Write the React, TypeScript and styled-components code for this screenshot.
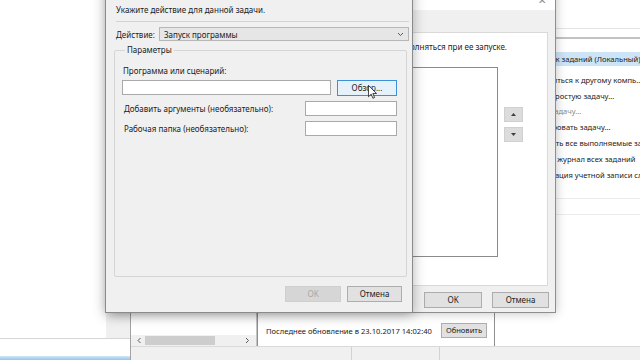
import React from 'react'
import styled, { createGlobalStyle } from 'styled-components'

const GlobalStyle = createGlobalStyle`
  html, body {
    margin: 0;
    padding: 0;
  }
  body {
    width: 640px;
    height: 360px;
    overflow: hidden;
    background: #fff;
    font-family: "Noto Sans", "Liberation Sans", sans-serif;
    font-size: 8px;
    color: #1b1b1b;
  }
  * {
    box-sizing: border-box;
  }
`

const Desktop = styled.div`
  position: relative;
  width: 640px;
  height: 360px;
  overflow: hidden;
  background: #fff;
`

/* window peeking out on the far left */
const SideWindow = styled.div`
  position: absolute;
  left: 0;
  top: 0;
  width: 131px;
  height: 360px;
  display: flex;
  flex-direction: column;
`

const SideBody = styled.div`
  flex: 1;
  display: flex;
  justify-content: flex-end;
  border-bottom: 1px solid #d6d6d6;
`

const SideStrip = styled.div`
  width: 25px;
  background: #f0f0f0;
`

const SideGap = styled.div`
  height: 17px;
`

const SideTaskbar = styled.div`
  height: 4px;
  background: linear-gradient(#d2e6f8, #94c3ee);
`

/* task scheduler main window */
const MainWindow = styled.div`
  position: absolute;
  left: 130px;
  top: 0;
  right: -20px;
  bottom: 0;
  display: grid;
  grid-template-columns: 126px 238px 1fr;
  grid-template-rows: 1fr 14px;
  background: #fff;
  border-left: 1px solid #a3a3a3;
`

const LeftPane = styled.div`
  display: flex;
  flex-direction: column;
  justify-content: flex-end;
  border-right: 1px solid #c4c4c4;
`

const HScroll = styled.div`
  height: 11px;
  display: flex;
  align-items: center;
  padding: 0 5px 0 4px;
  background: #f0f0f0;
`

const ScrollArrow = styled.span`
  width: 8px;
  display: flex;
  justify-content: center;
`

const ScrollThumb = styled.div`
  width: 70px;
  height: 9px;
  margin-left: 2px;
  margin-right: auto;
  background: #cdcdcd;
`

const CenterPane = styled.div`
  display: flex;
  flex-direction: column;
  justify-content: flex-end;
  border-left: 1px solid #8f8f8f;
  border-right: 1px solid #8f8f8f;
`

const RefreshRow = styled.div`
  display: flex;
  align-items: center;
  gap: 9px;
  padding: 0 0 8px 8px;
  font-size: 7.6px;
  white-space: nowrap;
`

const PushButton = styled.button<{ $width?: number; $state?: 'normal' | 'hover' | 'disabled' }>`
  height: ${p => (p.$width ? 16 : 15)}px;
  width: ${p => (p.$width ? `${p.$width}px` : 'auto')};
  padding: 0 4px;
  font: inherit;
  line-height: 1;
  white-space: nowrap;
  background: ${p => (p.$state === 'hover' ? '#e5f1fb' : p.$state === 'disabled' ? '#d6d6d6' : '#e1e1e1')};
  border: 1px solid ${p => (p.$state === 'hover' ? '#3c8fd8' : p.$state === 'disabled' ? '#cfcfcf' : '#adadad')};
  color: ${p => (p.$state === 'disabled' ? '#a8a8a8' : '#1b1b1b')};
`

const ActionsPane = styled.div`
  display: flex;
  flex-direction: column;
  overflow: hidden;
  font-size: 7.6px;
`

const ActionsToolbar = styled.div`
  height: 29px;
  border-bottom: 1px solid #e4e4e4;
`

const ActionsTitle = styled.div`
  height: 10px;
  border-bottom: 2px solid #c2c2c2;
`

const ActionsHeader = styled.div`
  height: 14px;
  margin-top: 13px;
  display: flex;
  align-items: center;
  padding-left: 12px;
  background: #cde4f6;
  white-space: nowrap;
`

const ActionList = styled.div`
  display: flex;
  flex-direction: column;
  margin-top: 6px;
`

const ActionItem = styled.div<{ $muted?: boolean }>`
  height: 15.8px;
  display: flex;
  align-items: center;
  padding-left: 24px;
  white-space: nowrap;
  color: ${p => (p.$muted ? '#8c8c8c' : '#1b1b1b')};
`

const PaneRule = styled.div`
  height: 16px;
  border-bottom: 1px solid #ececec;
`

const StatusBar = styled.div`
  grid-column: 1 / -1;
  display: flex;
  background: #f0f0f0;
  border-top: 1px solid #dadada;
`

const StatusCell = styled.div<{ $width?: number }>`
  flex: ${p => (p.$width ? `0 0 ${p.$width}px` : '1')};
  border-left: 1px solid #d2d2d2;

  &:first-child {
    border-left: none;
  }
`

/* "Создание задачи" dialog behind */
const TaskDialog = styled.div`
  position: absolute;
  left: 110px;
  top: -12px;
  width: 446px;
  height: 325px;
  display: flex;
  flex-direction: column;
  background: #f0f0f0;
  border: 1px solid #8e8e8e;
  box-shadow: 0 0 10px rgba(0, 0, 0, 0.25);
`

const TitleBar = styled.div<{ $height: number }>`
  height: ${p => p.$height}px;
  flex: none;
  display: flex;
  align-items: center;
  justify-content: space-between;
  padding: 0 6px 0 10px;
  background: #fff;
  font-size: 9px;
`

const CloseGlyph = styled.span`
  width: 14px;
  text-align: center;
  font-size: 10px;
  color: #8a8a8a;
`

const TabStrip = styled.div`
  height: 22px;
  flex: none;
  display: flex;
  align-items: flex-end;
  padding-left: 7px;
`

const Tab = styled.span<{ $active?: boolean }>`
  height: ${p => (p.$active ? 15 : 13)}px;
  padding: 0 5px;
  display: flex;
  align-items: center;
  background: ${p => (p.$active ? '#fff' : '#f0f0f0')};
  border: 1px solid #d9d9d9;
  border-bottom: none;
  margin-bottom: -1px;
`

const TabPanel = styled.div`
  flex: 1;
  margin: 0 7px 0 8px;
  display: flex;
  flex-direction: column;
  background: #fff;
  border: 1px solid #d9d9d9;
`

const PanelIntro = styled.div`
  display: flex;
  justify-content: flex-end;
  padding: 9px 40px 0 0;
  line-height: 10px;
  white-space: nowrap;
`

const ListArea = styled.div`
  display: flex;
  margin-top: 15px;
  padding: 0 24px 0 8px;
`

const ListBox = styled.div`
  flex: 1;
  height: 190px;
  background: #fff;
  border: 1px solid #8a8a8a;
`

const MoveButtons = styled.div`
  display: flex;
  flex-direction: column;
  gap: 5px;
  margin-left: 6px;
  padding-top: 40px;
`

const MoveButton = styled.div`
  width: 19px;
  height: 15px;
  display: flex;
  align-items: center;
  justify-content: center;
  background: #dcdcdc;
  border: 1px solid #d0d0d0;
`

const DialogButtons = styled.div<{ $gap: number }>`
  display: flex;
  justify-content: flex-end;
  gap: ${p => p.$gap}px;
`

const TaskButtons = styled(DialogButtons)`
  height: 26px;
  flex: none;
  padding: 6px 6px 0 0;
`

/* "Создание действия" dialog in front */
const ActionDialog = styled.div`
  position: absolute;
  left: 105px;
  top: -20px;
  width: 308px;
  height: 333px;
  display: flex;
  flex-direction: column;
  background: #f0f0f0;
  border: 1px solid #8a8a8a;
  box-shadow: 0 2px 12px rgba(0, 0, 0, 0.3);
`

const DialogBody = styled.div`
  flex: 1;
  display: flex;
  flex-direction: column;
  padding: 0 3px 10px 10px;
`

const Intro = styled.div`
  margin-top: 4px;
  line-height: 12px;
`

const Separator = styled.div`
  margin-top: 5px;
  border-top: 1px solid #d3d3d3;
`

const ActionRow = styled.div`
  display: flex;
  align-items: center;
  margin-top: 5px;
`

const RowLabel = styled.span`
  width: 43px;
  flex: none;
`

const ComboBox = styled.div`
  flex: 1;
  height: 14px;
  display: flex;
  align-items: center;
  justify-content: space-between;
  padding: 0 4px 0 4px;
  background: #e6e6e6;
  border: 1px solid #b7b7b7;
`

const GroupBox = styled.fieldset`
  flex: 1;
  min-width: 0;
  margin: 4px 2px 0 -2px;
  padding: 0 9px 0 7px;
  border: 1px solid #d5d5d5;
  border-radius: 2px;
`

const GroupLegend = styled.legend`
  margin-left: 3px;
  padding: 0 2px;
  line-height: 10px;
`

const FieldLabel = styled.div`
  margin-top: 11px;
  padding-left: 1px;
  line-height: 10px;
`

const PathRow = styled.div`
  display: flex;
  gap: 6px;
  margin-top: 4px;
`

const TextBox = styled.div`
  height: 15px;
  flex: 1;
  background: #fff;
  border: 1px solid #a9a9a9;
`

const OptionRow = styled.div`
  display: grid;
  grid-template-columns: 1fr 92px;
  align-items: center;
  margin-top: 5px;
  padding-left: 2px;
`

const ActionButtons = styled(DialogButtons)`
  margin: 9px 7px 0 0;
`

const Cursor = styled.svg`
  position: absolute;
  left: 368px;
  top: 85px;
`

function Chevron({ dir }: { dir: 'down' | 'left' | 'right' }) {
  const paths = {
    down: 'M1 1 L3.5 3.5 L6 1',
    left: 'M3.5 1 L1 3.5 L3.5 6',
    right: 'M1 1 L3.5 3.5 L1 6',
  }
  const w = dir === 'down' ? 7 : 5
  const h = dir === 'down' ? 5 : 7
  return (
    <svg width={w} height={h} viewBox={`0 0 ${w} ${h}`}>
      <path d={paths[dir]} fill="none" stroke="#5a5a5a" strokeWidth="1" />
    </svg>
  )
}

function Triangle({ up }: { up?: boolean }) {
  return (
    <svg width="5" height="3" viewBox="0 0 5 3">
      <path d={up ? 'M0 3 L2.5 0 L5 3 Z' : 'M0 0 L2.5 3 L5 0 Z'} fill="#404040" />
    </svg>
  )
}

const actions = [
  { label: 'Подключиться к другому компь...' },
  { label: 'Создать простую задачу...' },
  { label: 'Создать задачу...', muted: true },
  { label: 'Импортировать задачу...' },
  { label: 'Отображать все выполняемые задачи' },
  { label: 'Включить журнал всех заданий' },
  { label: 'Конфигурация учетной записи служ...' },
]

export default function App() {
  return (
    <>
      <GlobalStyle />
      <Desktop>
        <SideWindow>
          <SideBody>
            <SideStrip />
          </SideBody>
          <SideGap />
          <SideTaskbar />
        </SideWindow>

        <MainWindow>
          <LeftPane>
            <HScroll>
              <ScrollArrow><Chevron dir="left" /></ScrollArrow>
              <ScrollThumb />
              <ScrollArrow><Chevron dir="right" /></ScrollArrow>
            </HScroll>
          </LeftPane>
          <CenterPane>
            <RefreshRow>
              <span>Последнее обновление в 23.10.2017 14:02:40</span>
              <PushButton>Обновить</PushButton>
            </RefreshRow>
          </CenterPane>
          <ActionsPane>
            <ActionsToolbar />
            <ActionsTitle />
            <ActionsHeader>Планировщик заданий (Локальный)</ActionsHeader>
            <ActionList>
              {actions.map(a => (
                <ActionItem key={a.label} $muted={a.muted}>{a.label}</ActionItem>
              ))}
            </ActionList>
            <PaneRule />
            <PaneRule />
          </ActionsPane>
          <StatusBar>
            <StatusCell />
            <StatusCell $width={88} />
            <StatusCell />
          </StatusBar>
        </MainWindow>

        <TaskDialog>
          <TitleBar $height={21}>
            <span>Создание задачи</span>
            <CloseGlyph>✕</CloseGlyph>
          </TitleBar>
          <TabStrip>
            <Tab>Общие</Tab>
            <Tab>Триггеры</Tab>
            <Tab $active>Действия</Tab>
            <Tab>Условия</Tab>
            <Tab>Параметры</Tab>
          </TabStrip>
          <TabPanel>
            <PanelIntro>
              При создании задачи необходимо указать действие, которое будет выполняться при ее запуске.
            </PanelIntro>
            <ListArea>
              <ListBox />
              <MoveButtons>
                <MoveButton><Triangle up /></MoveButton>
                <MoveButton><Triangle /></MoveButton>
              </MoveButtons>
            </ListArea>
          </TabPanel>
          <TaskButtons $gap={10}>
            <PushButton $width={58}>OK</PushButton>
            <PushButton $width={57}>Отмена</PushButton>
          </TaskButtons>
        </TaskDialog>

        <ActionDialog>
          <TitleBar $height={19}>
            <span>Создание действия</span>
            <CloseGlyph>✕</CloseGlyph>
          </TitleBar>
          <DialogBody>
            <Intro>Укажите действие для данной задачи.</Intro>
            <Separator />
            <ActionRow>
              <RowLabel>Действие:</RowLabel>
              <ComboBox>
                <span>Запуск программы</span>
                <Chevron dir="down" />
              </ComboBox>
            </ActionRow>
            <GroupBox>
              <GroupLegend>Параметры</GroupLegend>
              <FieldLabel>Программа или сценарий:</FieldLabel>
              <PathRow>
                <TextBox />
                <PushButton $width={60} $state="hover">Обзор...</PushButton>
              </PathRow>
              <OptionRow>
                <span>Добавить аргументы (необязательно):</span>
                <TextBox />
              </OptionRow>
              <OptionRow>
                <span>Рабочая папка (необязательно):</span>
                <TextBox />
              </OptionRow>
            </GroupBox>
            <ActionButtons $gap={6}>
              <PushButton $width={56} $state="disabled">OK</PushButton>
              <PushButton $width={55}>Отмена</PushButton>
            </ActionButtons>
          </DialogBody>
        </ActionDialog>

        <Cursor width="9" height="14" viewBox="0 0 12 19">
          <path d="M0.5 0.5 L0.5 16 L4.2 12.4 L6.6 18 L8.8 17 L6.5 11.5 L11.5 11.5 Z" fill="#fff" stroke="#000" strokeWidth="1" />
        </Cursor>
      </Desktop>
    </>
  )
}
